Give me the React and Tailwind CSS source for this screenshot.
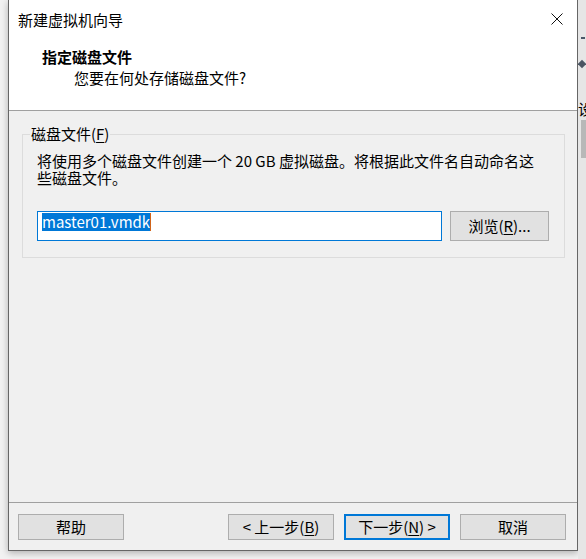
import React from "react";

const U = ({ children }) => (
  <span className="underline underline-offset-[2px] decoration-1">{children}</span>
);

function Btn({ children, primary = false }) {
  return (
    <div
      className={
        "w-[106px] h-[26px] flex items-center justify-center bg-[#e1e1e1] leading-[18px] " +
        (primary ? "border-2 border-[#0078d7]" : "border border-[#adadad]")
      }
    >
      {children}
    </div>
  );
}

export default function App() {
  return (
    <div className="w-[586px] h-[559px] flex bg-[#f2f2f2] overflow-hidden text-[15px] text-black font-['Noto_Sans_CJK_SC','Microsoft_YaHei',sans-serif]">
      <div className="w-[8px] shrink-0" />
      <div className="w-[570px] h-[551px] shrink-0 flex flex-col border-x border-b border-[#666666] bg-[#f0f0f0] shadow-[0_2px_7px_rgba(0,0,0,0.28)]">
        {/* header */}
        <div className="h-[111px] shrink-0 bg-white border-b border-[#a0a0a0]">
          <div className="pt-[11px] flex justify-between">
            <div className="pl-[9px] leading-[18px]">新建虚拟机向导</div>
            <svg
              className="mt-[2px] mr-[14px]"
              width="12"
              height="12"
              viewBox="0 0 12 12"
              fill="none"
              stroke="#111"
              strokeWidth="1"
            >
              <path d="M0.5 0.5 L11.5 11.5 M11.5 0.5 L0.5 11.5" />
            </svg>
          </div>
          <div className="mt-[19px] pl-[33px] leading-[18px] font-bold">指定磁盘文件</div>
          <div className="mt-[3px] pl-[65px] leading-[18px]">您要在何处存储磁盘文件?</div>
        </div>

        {/* body */}
        <div className="flex-1">
          <div className="relative ml-[13px] mt-[23px] w-[543px] border border-[#dcdcdc] pl-[14px] pt-[17px] pb-[16px]">
            <div className="absolute left-[7px] top-[-10px] px-[1px] leading-[18px] bg-[#f0f0f0]">
              磁盘文件(<U>F</U>)
            </div>
            <div className="leading-[17px] whitespace-nowrap">
              将使用多个磁盘文件创建一个 20 GB 虚拟磁盘。将根据此文件名自动命名这
              <br />
              些磁盘文件。
            </div>
            <div className="mt-[25px] flex gap-[8px]">
              <div className="w-[405px] h-[30px] bg-white border border-[#0078d7] pl-[4px] pt-[1px] flex items-start">
                <span className="bg-[#0078d7] text-white leading-[18px]">master01.vmdk</span>
                <span className="w-[1px] h-[18px] bg-[#d0641a]" />
              </div>
              <div className="w-[99px] h-[30px] flex items-center justify-center bg-[#e1e1e1] border border-[#adadad] leading-[18px]">
                浏览(<U>R</U>)...
              </div>
            </div>
          </div>
        </div>

        {/* footer */}
        <div className="h-[48px] shrink-0 border-t border-[#a0a0a0] pt-[11px] pl-[9px] pr-[11px] flex items-start">
          <Btn>帮助</Btn>
          <div className="flex-1" />
          <div className="flex gap-[10px]">
            <Btn>&lt; 上一步(<U>B</U>)</Btn>
            <Btn primary>
              下一步(<U>N</U>) &gt;
            </Btn>
            <Btn>取消</Btn>
          </div>
        </div>
      </div>

      {/* right background strip */}
      <div className="relative w-[8px] h-full shrink-0 bg-[#e6e6e6] overflow-hidden">
        <div className="absolute left-[3px] top-[37px] w-[4px] h-[2px] bg-[#4a5868]" />
        <div className="absolute left-[1px] top-[61px] w-[6px] h-[6px] rotate-45 bg-[#4b5563]" />
        <div className="absolute left-[0px] top-[100px] leading-[18px] whitespace-nowrap">设</div>
        <div className="absolute left-[3px] right-0 top-[120px] h-[38px] bg-[#b8b8b8]" />
      </div>
    </div>
  );
}
